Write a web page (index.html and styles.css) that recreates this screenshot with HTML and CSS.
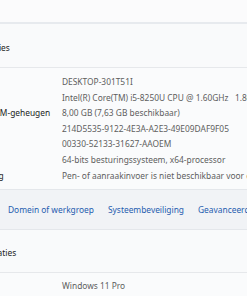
FILE: index.html
```html
<!DOCTYPE html>
<html lang="nl">
<head>
    <meta charset="UTF-8">
    <title>Info</title>
    <link rel="stylesheet" href="styles.css">
</head>
<body>
    <div class="page">
        <div class="top"></div>

        <div class="card">
            <div class="card-head">Apparaatspecificaties</div>
            <div class="specs">
                <div class="label">Apparaatnaam</div>
                <div class="value">DESKTOP-301T51I</div>
                <div class="label">Processor</div>
                <div class="value">Intel(R) Core(TM) i5-8250U CPU @ 1.60GHz   1.80 GHz</div>
                <div class="label">Geïnstalleerd RAM-geheugen</div>
                <div class="value">8,00 GB (7,63 GB beschikbaar)</div>
                <div class="label">Apparaat-id</div>
                <div class="value">214D5535-9122-4E3A-A2E3-49E09DAF9F05</div>
                <div class="label">Product-id</div>
                <div class="value">00330-52133-31627-AAOEM</div>
                <div class="label">Type systeem</div>
                <div class="value">64-bits besturingssysteem, x64-processor</div>
                <div class="label">Pen en aanraking</div>
                <div class="value">Pen- of aanraakinvoer is niet beschikbaar voor dit beeldscherm</div>
            </div>
            <div class="links">
                <a href="#">Domein of werkgroep</a>
                <a href="#">Systeembeveiliging</a>
                <a href="#">Geavanceerde systeeminstellingen</a>
            </div>
        </div>

        <div class="card second">
            <div class="card-head">Windows-specificaties</div>
            <div class="specs">
                <div class="label">Editie</div>
                <div class="value">Windows 11 Pro</div>
            </div>
        </div>
    </div>
</body>
</html>
```
FILE: styles.css
```css
body {
    margin: 0;
    background: #fafbfc;
    font-family: "Noto Sans", sans-serif;
    font-size: 8.4px;
    overflow: hidden;
}

.page {
    margin-left: -80px;
    width: 640px;
}

.top {
    height: 22px;
    background: #fbfbfc;
}

.card {
    border-top: 2px solid #e7eaee;
    background: #f9fafb;
}

.card-head {
    height: 40px;
    padding: 3px 0 0 6px;
    display: flex;
    align-items: center;
    color: #1b1b1b;
    border-bottom: 1px solid #e6e8eb;
}

.specs {
    display: grid;
    grid-template-columns: 127px 1fr;
    padding: 6px 0 6px 15px;
    line-height: 15.6px;
    background: #fafbfc;
}

.label {
    color: #1b1b1b;
    white-space: nowrap;
}

.value {
    color: #5e5e5e;
    white-space: pre;
}

.links {
    height: 38px;
    display: flex;
    align-items: center;
    gap: 14px;
    padding: 0 0 1px 88px;
    background: #f1f3f6;
    border-top: 1px solid #e4e7eb;
    border-bottom: 1px solid #e4e7eb;
    white-space: nowrap;
}

.links a {
    color: #1f5caf;
    text-decoration: none;
}

.second {
    border-top: none;
}

.second .card-head {
    height: 39px;
    padding: 3px 0 0 10px;
}

.second .specs {
    padding-top: 5px;
}
```
